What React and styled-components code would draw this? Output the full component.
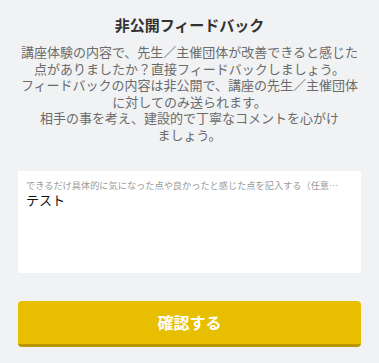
import React from 'react';
import styled, { createGlobalStyle } from 'styled-components';

const GlobalStyle = createGlobalStyle`
  html, body {
    margin: 0;
    padding: 0;
    background: #f1f2f4;
  }
  body {
    font-family: "Noto Sans CJK JP", "Noto Sans", sans-serif;
  }
`;

const Page = styled.div`
  min-height: 363px;
  padding: 15px 18px 0;
  box-sizing: border-box;
  background: #f1f2f4;
`;

const Title = styled.h2`
  margin: 0;
  font-size: 15px;
  line-height: 20px;
  font-weight: 700;
  color: #333333;
  text-align: center;
`;

const Lead = styled.p`
  margin: 9px 0 0;
  font-size: 13px;
  line-height: 16.6px;
  color: #6b6b6b;
  text-align: center;
  white-space: nowrap;
`;

const Field = styled.label`
  display: flex;
  flex-direction: column;
  margin-top: 27px;
  height: 102px;
  padding: 8px 8px 0;
  box-sizing: border-box;
  background: #ffffff;
`;

const Hint = styled.span`
  font-size: 9.2px;
  line-height: 12px;
  color: #9a9a9a;
  white-space: nowrap;
  overflow: hidden;
`;

const Input = styled.textarea`
  flex: 1;
  margin: 0;
  padding: 0;
  border: none;
  outline: none;
  resize: none;
  background: transparent;
  font-family: "Noto Sans CJK JP", "Noto Sans", sans-serif;
  font-size: 13px;
  line-height: 17px;
  color: #111111;
`;

const Submit = styled.button`
  display: block;
  width: 100%;
  height: 46px;
  margin-top: 28px;
  padding: 0;
  border: none;
  border-bottom: 3px solid #b89600;
  border-radius: 4px;
  background: ${p => p.bg};
  color: #ffffff;
  font-family: "Noto Sans CJK JP", "Noto Sans", sans-serif;
  font-size: 16px;
  font-weight: 700;
  cursor: pointer;
`;

const App = () => {
  return (
    <>
      <GlobalStyle />
      <Page>
        <Title>非公開フィードバック</Title>
        <Lead>
          講座体験の内容で、先生／主催団体が改善できると感じた<br />
          点がありましたか？直接フィードバックしましょう。<br />
          フィードバックの内容は非公開で、講座の先生／主催団体<br />
          に対してのみ送られます。<br />
          相手の事を考え、建設的で丁寧なコメントを心がけ<br />
          ましょう。
        </Lead>
        <Field>
          <Hint>できるだけ具体的に気になった点や良かったと感じた点を記入する（任意…</Hint>
          <Input defaultValue="テスト" />
        </Field>
        <Submit bg="#e8bf00">確認する</Submit>
      </Page>
    </>
  );
};

export default App;
